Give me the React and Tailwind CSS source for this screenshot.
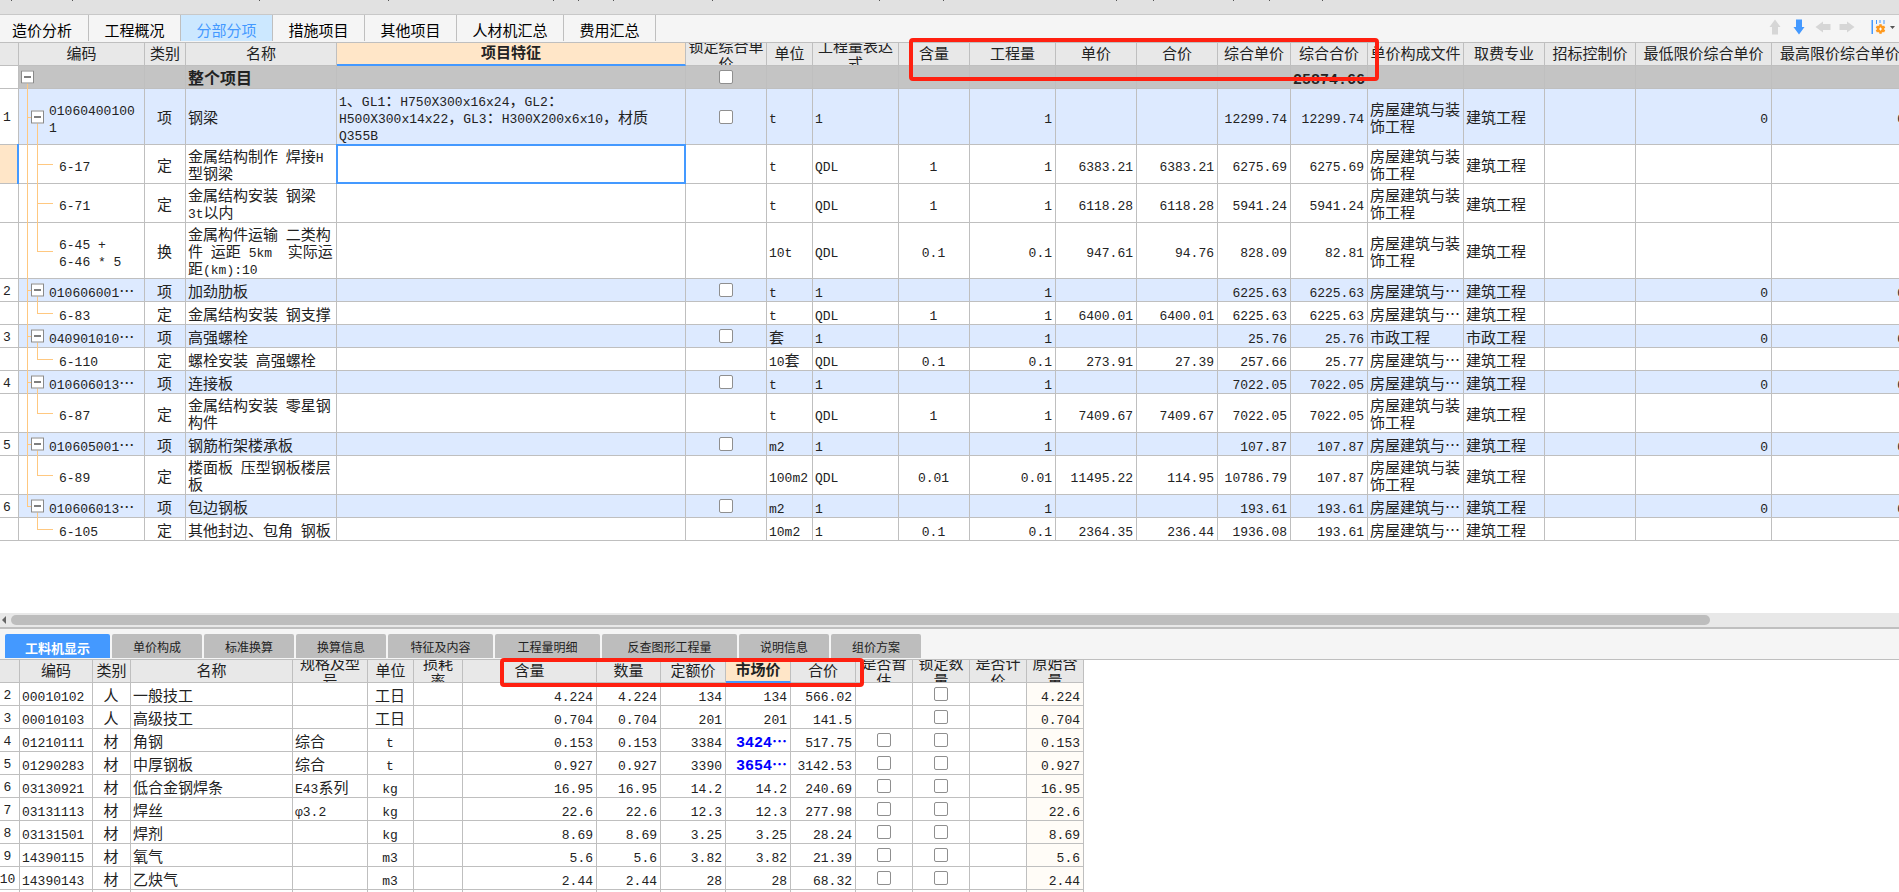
import React from "react";

const CJK = 'font-["Noto_Sans_CJK_SC",sans-serif]';
const LINE = "border-[#bfbfbf]";

/* Latin runs are set in the narrow monospace face, Chinese runs in the base face. */
function Mixed({ text, big }) {
  const runs = text.match(/[\x20-\x7eφ]+|[^\x20-\x7eφ]+/g) || [];
  return runs.map((run, i) =>
    /^[\x20-\x7eφ]/.test(run) ? (
      <span
        key={i}
        className={`font-["Liberation_Mono",monospace] leading-[10px] ${big ? "text-[15px]" : "text-[13px]"}`}
      >
        {run}
      </span>
    ) : (
      <span key={i}>{run}</span>
    )
  );
}

function Lines({ text, big }) {
  return text.split("\n").map((line, i) => (
    <span key={i} className="block whitespace-pre">
      <Mixed text={line} big={big} />
    </span>
  ));
}

function Check({ label }) {
  return (
    <input
      type="checkbox"
      aria-label={label}
      className="mx-auto block size-3.5 appearance-none rounded-xs border border-[#8f8f8f] bg-white checked:bg-[#4499ff]"
    />
  );
}

function HeaderCell({ label, active }) {
  return (
    <th
      scope="col"
      className={`h-[23px] border-r p-0 ${
        active
          ? "border-b-2 border-r-[#bfbfbf] border-b-[#4499ff] bg-[#ffe6c8] font-bold"
          : "border-b border-[#bfbfbf] bg-[#e8e8e8] font-normal"
      }`}
    >
      <div
        className={`flex flex-col justify-center overflow-hidden text-center leading-[17px] ${
          active ? "h-[21px] pb-1" : label.includes("\n") ? "h-[22px]" : "h-[22px] pb-[3px]"
        }`}
      >
        <Lines text={label} />
      </div>
    </th>
  );
}

const topCols = [
  ["w-[19px]", ""],
  ["w-[126px]", "编码"],
  ["w-[41px]", "类别"],
  ["w-[151px]", "名称"],
  ["w-[349px]", "项目特征"],
  ["w-[81px]", "锁定综合单\n价"],
  ["w-[46px]", "单位"],
  ["w-[86px]", "工程量表达\n式"],
  ["w-[71px]", "含量"],
  ["w-[86px]", "工程量"],
  ["w-[81px]", "单价"],
  ["w-[81px]", "合价"],
  ["w-[73px]", "综合单价"],
  ["w-[77px]", "综合合价"],
  ["w-[96px]", "单价构成文件"],
  ["w-[81px]", "取费专业"],
  ["w-[91px]", "招标控制价"],
  ["w-[136px]", "最低限价综合单价"],
  ["w-[137px]", "最高限价综合单价"],
];

const LONG = "房屋建筑与装\n饰工程";
const SHORT = "房屋建筑与…";
const BUILD = "建筑工程";

/* kind, no, code, type, name, feature, unit, expression, content, quantity, price, total, unit rate, rate total, file, trade */
const topRows = [
  ["root", "", "", "", "整个项目", "", "", "", "", "", "", "", "", "25874.66", "", ""],
  ["item", "1", "01060400100\n1", "项", "钢梁", "1、GL1：H750X300x16x24，GL2：\nH500X300x14x22，GL3：H300X200x6x10，材质\nQ355B", "t", "1", "", "1", "", "", "12299.74", "12299.74", LONG, BUILD],
  ["sub", "", "6-17", "定", "金属结构制作 焊接H\n型钢梁", "", "t", "QDL", "1", "1", "6383.21", "6383.21", "6275.69", "6275.69", LONG, BUILD],
  ["sub", "", "6-71", "定", "金属结构安装 钢梁\n3t以内", "", "t", "QDL", "1", "1", "6118.28", "6118.28", "5941.24", "5941.24", LONG, BUILD],
  ["end", "", "6-45 +\n6-46 * 5", "换", "金属构件运输 二类构\n件 运距 5km  实际运\n距(km):10", "", "10t", "QDL", "0.1", "0.1", "947.61", "94.76", "828.09", "82.81", LONG, BUILD],
  ["item", "2", "010606001…", "项", "加劲肋板", "", "t", "1", "", "1", "", "", "6225.63", "6225.63", SHORT, BUILD],
  ["end", "", "6-83", "定", "金属结构安装 钢支撑", "", "t", "QDL", "1", "1", "6400.01", "6400.01", "6225.63", "6225.63", SHORT, BUILD],
  ["item", "3", "040901010…", "项", "高强螺栓", "", "套", "1", "", "1", "", "", "25.76", "25.76", "市政工程", "市政工程"],
  ["end", "", "6-110", "定", "螺栓安装 高强螺栓", "", "10套", "QDL", "0.1", "0.1", "273.91", "27.39", "257.66", "25.77", SHORT, BUILD],
  ["item", "4", "010606013…", "项", "连接板", "", "t", "1", "", "1", "", "", "7022.05", "7022.05", SHORT, BUILD],
  ["end", "", "6-87", "定", "金属结构安装 零星钢\n构件", "", "t", "QDL", "1", "1", "7409.67", "7409.67", "7022.05", "7022.05", LONG, BUILD],
  ["item", "5", "010605001…", "项", "钢筋桁架楼承板", "", "m2", "1", "", "1", "", "", "107.87", "107.87", SHORT, BUILD],
  ["end", "", "6-89", "定", "楼面板 压型钢板楼层\n板", "", "100m2", "QDL", "0.01", "0.01", "11495.22", "114.95", "10786.79", "107.87", LONG, BUILD],
  ["item", "6", "010606013…", "项", "包边钢板", "", "m2", "1", "", "1", "", "", "193.61", "193.61", SHORT, BUILD],
  ["end", "", "6-105", "定", "其他封边、包角 钢板", "", "10m2", "1", "0.1", "0.1", "2364.35", "236.44", "1936.08", "193.61", SHORT, BUILD],
];

function Toggle({ label, className }) {
  return (
    <button
      type="button"
      aria-label={label}
      className={`absolute top-1/2 flex size-[13px] -translate-y-1/2 items-center justify-center border border-[#8a8a8a] bg-white ${className}`}
    >
      <span className="h-px w-[7px] bg-black" />
    </button>
  );
}

function CodeCell({ kind, code, lastItem, afterLast }) {
  const stroke = "absolute bg-[#ffc880]";
  const isSub = kind === "sub" || kind === "end";
  return (
    <td className={`relative border-r border-b py-[2px] ${LINE} ${isSub ? "pl-10" : "pl-[30px]"}`}>
      {kind === "root" && <span className={`${stroke} top-1/2 -bottom-px left-2 w-px`} />}
      {kind !== "root" && !afterLast && (
        <span className={`${stroke} top-0 left-2 w-px ${lastItem ? "bottom-1/2" : "-bottom-px"}`} />
      )}
      {kind === "item" && (
        <>
          <span className={`${stroke} top-1/2 left-2 h-px w-2`} />
          <span className={`${stroke} top-1/2 -bottom-px left-[18px] w-px`} />
        </>
      )}
      {isSub && (
        <>
          <span className={`${stroke} top-0 left-[18px] w-px ${kind === "end" ? "bottom-1/2" : "-bottom-px"}`} />
          <span className={`${stroke} top-1/2 left-[18px] h-px w-4`} />
        </>
      )}
      {kind === "root" && <Toggle label="折叠整个项目" className="left-0.5" />}
      {kind === "item" && <Toggle label={`折叠 ${code}`} className="left-3" />}
      <Lines text={code} />
    </td>
  );
}

function TopTable() {
  const cell = `border-r border-b py-[2px] pr-[3px] pl-0.5 ${LINE}`;
  return (
    <table className="w-[1909px] table-fixed border-separate border-spacing-0">
      <colgroup>
        {topCols.map(([w], i) => (
          <col key={i} className={w} />
        ))}
      </colgroup>
      <thead>
        <tr>
          {topCols.map(([, label], i) => (
            <HeaderCell key={i} label={label} active={i === 4} />
          ))}
        </tr>
      </thead>
      <tbody>
        {topRows.map((r, i) => {
          const [kind, no, code, type, name, feature, unit, expr, content, qty, price, total, rate, rateTotal, file, trade] = r;
          const root = kind === "root";
          const item = kind === "item";
          const selected = i === 2;
          return (
            <tr key={i} className={`h-[23px] ${root ? "bg-[#c4c4c4]" : item ? "bg-[#ddeaff]" : "bg-white"}`}>
              <td className={`relative border-r border-b pr-1 pb-1 text-center ${LINE} ${selected ? "bg-[#ffe6c8]" : "bg-white"}`}>
                <Lines text={no} />
                {selected && <span className="absolute -top-px -right-px -bottom-px w-0.5 bg-[#4499ff]" />}
              </td>
              <CodeCell kind={kind} code={code} lastItem={no === "6"} afterLast={i === topRows.length - 1} />
              <td className={`${cell} text-center`}>
                <Lines text={type} />
              </td>
              <td className={`${cell} ${root ? "text-base leading-[17px] font-bold" : ""}`}>
                <Lines text={name} />
              </td>
              <td className={`${cell} relative`}>
                <Lines text={feature} />
                {selected && <span className="absolute -inset-px border-2 border-[#4499ff]" />}
              </td>
              <td className={cell}>{(root || item) && <Check label={`锁定综合单价 ${name}`} />}</td>
              <td className={cell}>
                <Lines text={unit} />
              </td>
              <td className={cell}>
                <Lines text={expr} />
              </td>
              <td className={`${cell} text-center`}>
                <Lines text={content} />
              </td>
              {[qty, price, total, rate, rateTotal].map((v, k) => (
                <td key={k} className={`${cell} text-right ${root ? "font-bold" : ""}`}>
                  <Lines text={v} big={root} />
                </td>
              ))}
              <td className={cell}>
                <Lines text={file} />
              </td>
              <td className={cell}>
                <Lines text={trade} />
              </td>
              <td className={cell} />
              <td className={`${cell} text-right`}>
                <Lines text={item ? "0" : ""} />
              </td>
              <td className={`${cell} text-right`}>
                <Lines text={item ? "0" : ""} />
              </td>
            </tr>
          );
        })}
      </tbody>
    </table>
  );
}

const bottomCols = [
  ["w-[20px]", ""],
  ["w-[73px]", "编码"],
  ["w-[38px]", "类别"],
  ["w-[162px]", "名称"],
  ["w-[75px]", "规格及型\n号"],
  ["w-[46px]", "单位"],
  ["w-[49px]", "损耗\n率"],
  ["w-[134px]", "含量"],
  ["w-[64px]", "数量"],
  ["w-[65px]", "定额价"],
  ["w-[65px]", "市场价"],
  ["w-[65px]", "合价"],
  ["w-[57px]", "是否暂\n估"],
  ["w-[57px]", "锁定数\n量"],
  ["w-[57px]", "是否计\n价"],
  ["w-[57px]", "原始含\n量"],
];

/* no, code, type, name, spec, unit, content, quota price, market price, total */
const bottomRows = [
  ["2", "00010102", "人", "一般技工", "", "工日", "4.224", "134", "134", "566.02"],
  ["3", "00010103", "人", "高级技工", "", "工日", "0.704", "201", "201", "141.5"],
  ["4", "01210111", "材", "角钢", "综合", "t", "0.153", "3384", "3424…", "517.75"],
  ["5", "01290283", "材", "中厚钢板", "综合", "t", "0.927", "3390", "3654…", "3142.53"],
  ["6", "03130921", "材", "低合金钢焊条", "E43系列", "kg", "16.95", "14.2", "14.2", "240.69"],
  ["7", "03131113", "材", "焊丝", "φ3.2", "kg", "22.6", "12.3", "12.3", "277.98"],
  ["8", "03131501", "材", "焊剂", "", "kg", "8.69", "3.25", "3.25", "28.24"],
  ["9", "14390115", "材", "氧气", "", "m3", "5.6", "3.82", "3.82", "21.39"],
  ["10", "14390143", "材", "乙炔气", "", "m3", "2.44", "28", "28", "68.32"],
  ["", "", "", "", "", "", "", "", "", ""],
];

function BottomTable() {
  const cell = `border-r border-b py-[2px] pr-[3px] pl-0.5 ${LINE}`;
  return (
    <table className="w-[1084px] table-fixed border-separate border-spacing-0">
      <colgroup>
        {bottomCols.map(([w], i) => (
          <col key={i} className={w} />
        ))}
      </colgroup>
      <thead>
        <tr>
          {bottomCols.map(([, label], i) => (
            <HeaderCell key={i} label={label} active={i === 10} />
          ))}
        </tr>
      </thead>
      <tbody>
        {bottomRows.map(([no, code, type, name, spec, unit, content, quota, market, total], i) => {
          const changed = market.endsWith("…");
          return (
            <tr key={i} className="h-[23px]">
              <td className={`border-r border-b pr-1 pb-1 ${LINE}`}>
                <div className="flex justify-center">
                  <Lines text={no} />
                </div>
              </td>
              <td className={cell}>
                <Lines text={code} />
              </td>
              <td className={`${cell} text-center`}>
                <Lines text={type} />
              </td>
              <td className={cell}>
                <Lines text={name} />
              </td>
              <td className={cell}>
                <Lines text={spec} />
              </td>
              <td className={`${cell} text-center`}>
                <Lines text={unit} />
              </td>
              <td className={cell} />
              <td className={`${cell} text-right`}>
                <Lines text={content} />
              </td>
              <td className={`${cell} text-right`}>
                <Lines text={content} />
              </td>
              <td className={`${cell} text-right`}>
                <Lines text={quota} />
              </td>
              <td className={`${cell} text-right ${changed ? "font-bold text-[#0000ff]" : ""}`}>
                <Lines text={market} big={changed} />
              </td>
              <td className={`${cell} text-right`}>
                <Lines text={total} />
              </td>
              <td className={cell}>{type === "材" && <Check label={`是否暂估 ${name}`} />}</td>
              <td className={cell}>{type && <Check label={`锁定数量 ${name}`} />}</td>
              <td className={cell} />
              <td className={`${cell} bg-[#fffcf7] text-right`}>
                <Lines text={content} />
              </td>
            </tr>
          );
        })}
      </tbody>
    </table>
  );
}

const topTabs = [
  ["造价分析", "w-[89px] pr-1"],
  ["工程概况", "w-[92px]"],
  ["分部分项", "w-[92px]"],
  ["措施项目", "w-[92px]"],
  ["其他项目", "w-[92px]"],
  ["人材机汇总", "w-[107px]"],
  ["费用汇总", "w-[92px]"],
];

const bottomTabs = [
  ["工料机显示", "w-[105px]"],
  ["单价构成", "w-[90px]"],
  ["标准换算", "w-[90px]"],
  ["换算信息", "w-[90px]"],
  ["特征及内容", "w-[105px]"],
  ["工程量明细", "w-[105px]"],
  ["反查图形工程量", "w-[135px]"],
  ["说明信息", "w-[90px]"],
  ["组价方案", "w-[90px]"],
];

function Arrow({ label, rotate, color }) {
  return (
    <button type="button" aria-label={label} className="flex size-4 items-center justify-center">
      <svg viewBox="0 0 16 16" className={`size-4 ${rotate} ${color}`} fill="currentColor">
        <path d="M8 0.5 L13.5 8 H11 V15.5 H5 V8 H2.5 Z" />
      </svg>
    </button>
  );
}

const ticks = [11, 72, 259, 388, 553, 578, 613, 712, 879, 943, 1116, 1153, 1233, 1269, 1322];

export default function App() {
  return (
    <div className={`flex h-screen flex-col overflow-hidden bg-white text-[15px] leading-[17px] text-[#222] ${CJK}`} lang="zh-CN">
      <div className="h-[15px] shrink-0 border-b border-[#c8c8c8] bg-[#e1e1e1]">
        <svg className="block h-px w-full" aria-hidden="true">
          {ticks.map((x) => (
            <rect key={x} x={x} y="0" width="1" height="1" fill="#555" />
          ))}
        </svg>
      </div>

      <div className="flex h-[28px] shrink-0 items-center justify-between border-b border-[#bfbfbf] bg-[#f5f5f5]">
        <nav className="flex h-[26px] self-start">
          {topTabs.map(([label, w], i) => (
            <button
              key={label}
              type="button"
              className={`border-r border-[#bfbfbf] pt-0.5 text-center ${w} ${
                i === 2 ? "bg-[#cce8ff] text-[#4499ff]" : "text-black"
              }`}
            >
              {label}
            </button>
          ))}
        </nav>
        <div className="flex h-6 items-center self-start pr-1">
          <div className="flex gap-2">
            <Arrow label="上移" rotate="" color="text-[#d6d6d6]" />
            <Arrow label="下移" rotate="rotate-180" color="text-[#4499ff]" />
            <Arrow label="左移" rotate="-rotate-90" color="text-[#d6d6d6]" />
            <Arrow label="右移" rotate="rotate-90" color="text-[#d6d6d6]" />
          </div>
          <button type="button" aria-label="列设置" className="ml-4 flex items-center gap-1">
            <svg viewBox="0 0 15 16" className="h-4 w-[15px]">
              <path d="M0.5 1h1.5v14H0.5zM5 1h1v4h-1zM8.500 1h1v3h-1zM12.500 1h1v4h-1z" fill="#4499ff" />
              <g fill="#ff9a1f">
                <circle cx="9.500" cy="10" r="3.700" />
                <rect x="8.300" y="5.200" width="2.400" height="9.600" />
                <rect x="8.300" y="5.200" width="2.400" height="9.600" transform="rotate(60 9.500 10)" />
                <rect x="8.300" y="5.200" width="2.400" height="9.600" transform="rotate(120 9.500 10)" />
              </g>
              <path d="M9 8.500h1v1h1v1h-1v1h-1v-1h-1v-1h1z" fill="#fff" />
            </svg>
            <svg viewBox="0 0 5 3" className="h-[3px] w-[5px]">
              <path d="M0 0h5L2.500 3z" fill="#555" />
            </svg>
          </button>
        </div>
      </div>

      <main className="relative min-h-0 flex-1">
        <div className="h-full overflow-hidden">
          <TopTable />
        </div>
        <div className="pointer-events-none absolute -top-[5px] left-[909px] h-[43px] w-[470px] rounded-sm border-4 border-[#ff2010]" />
      </main>

      <div className="flex h-4 shrink-0 items-center border-b-2 border-[#bfbfbf] bg-[#e8e8e8] pl-0.5">
        <button type="button" aria-label="向左滚动" className="w-[9px]">
          <svg viewBox="0 0 4 8" className="h-2 w-1">
            <path d="M4 0v8L0 4z" fill="#666" />
          </svg>
        </button>
        <div className="flex-1">
          <div className="h-2.5 w-9/10 rounded-full bg-[#bdbdbd]" />
        </div>
      </div>

      <section className="relative h-[263px] shrink-0">
        <nav className="flex h-[31px] items-start gap-0.5 border-b border-[#bfbfbf] bg-[#f5f5f5] pt-[5px] pl-[5px]">
          {bottomTabs.map(([label, w], i) => (
            <button
              key={label}
              type="button"
              className={`h-6 rounded-t-xs pt-0.5 ${w} ${
                i === 0 ? "bg-[#4499ff] text-[13px] font-bold text-white" : "bg-[#bdbdbd] text-xs text-[#222]"
              }`}
            >
              {label}
            </button>
          ))}
        </nav>
        <BottomTable />
        <div className="pointer-events-none absolute top-[29px] left-[500px] h-[29px] w-[364px] rounded-sm border-4 border-[#ff2010]" />
      </section>
    </div>
  );
}
